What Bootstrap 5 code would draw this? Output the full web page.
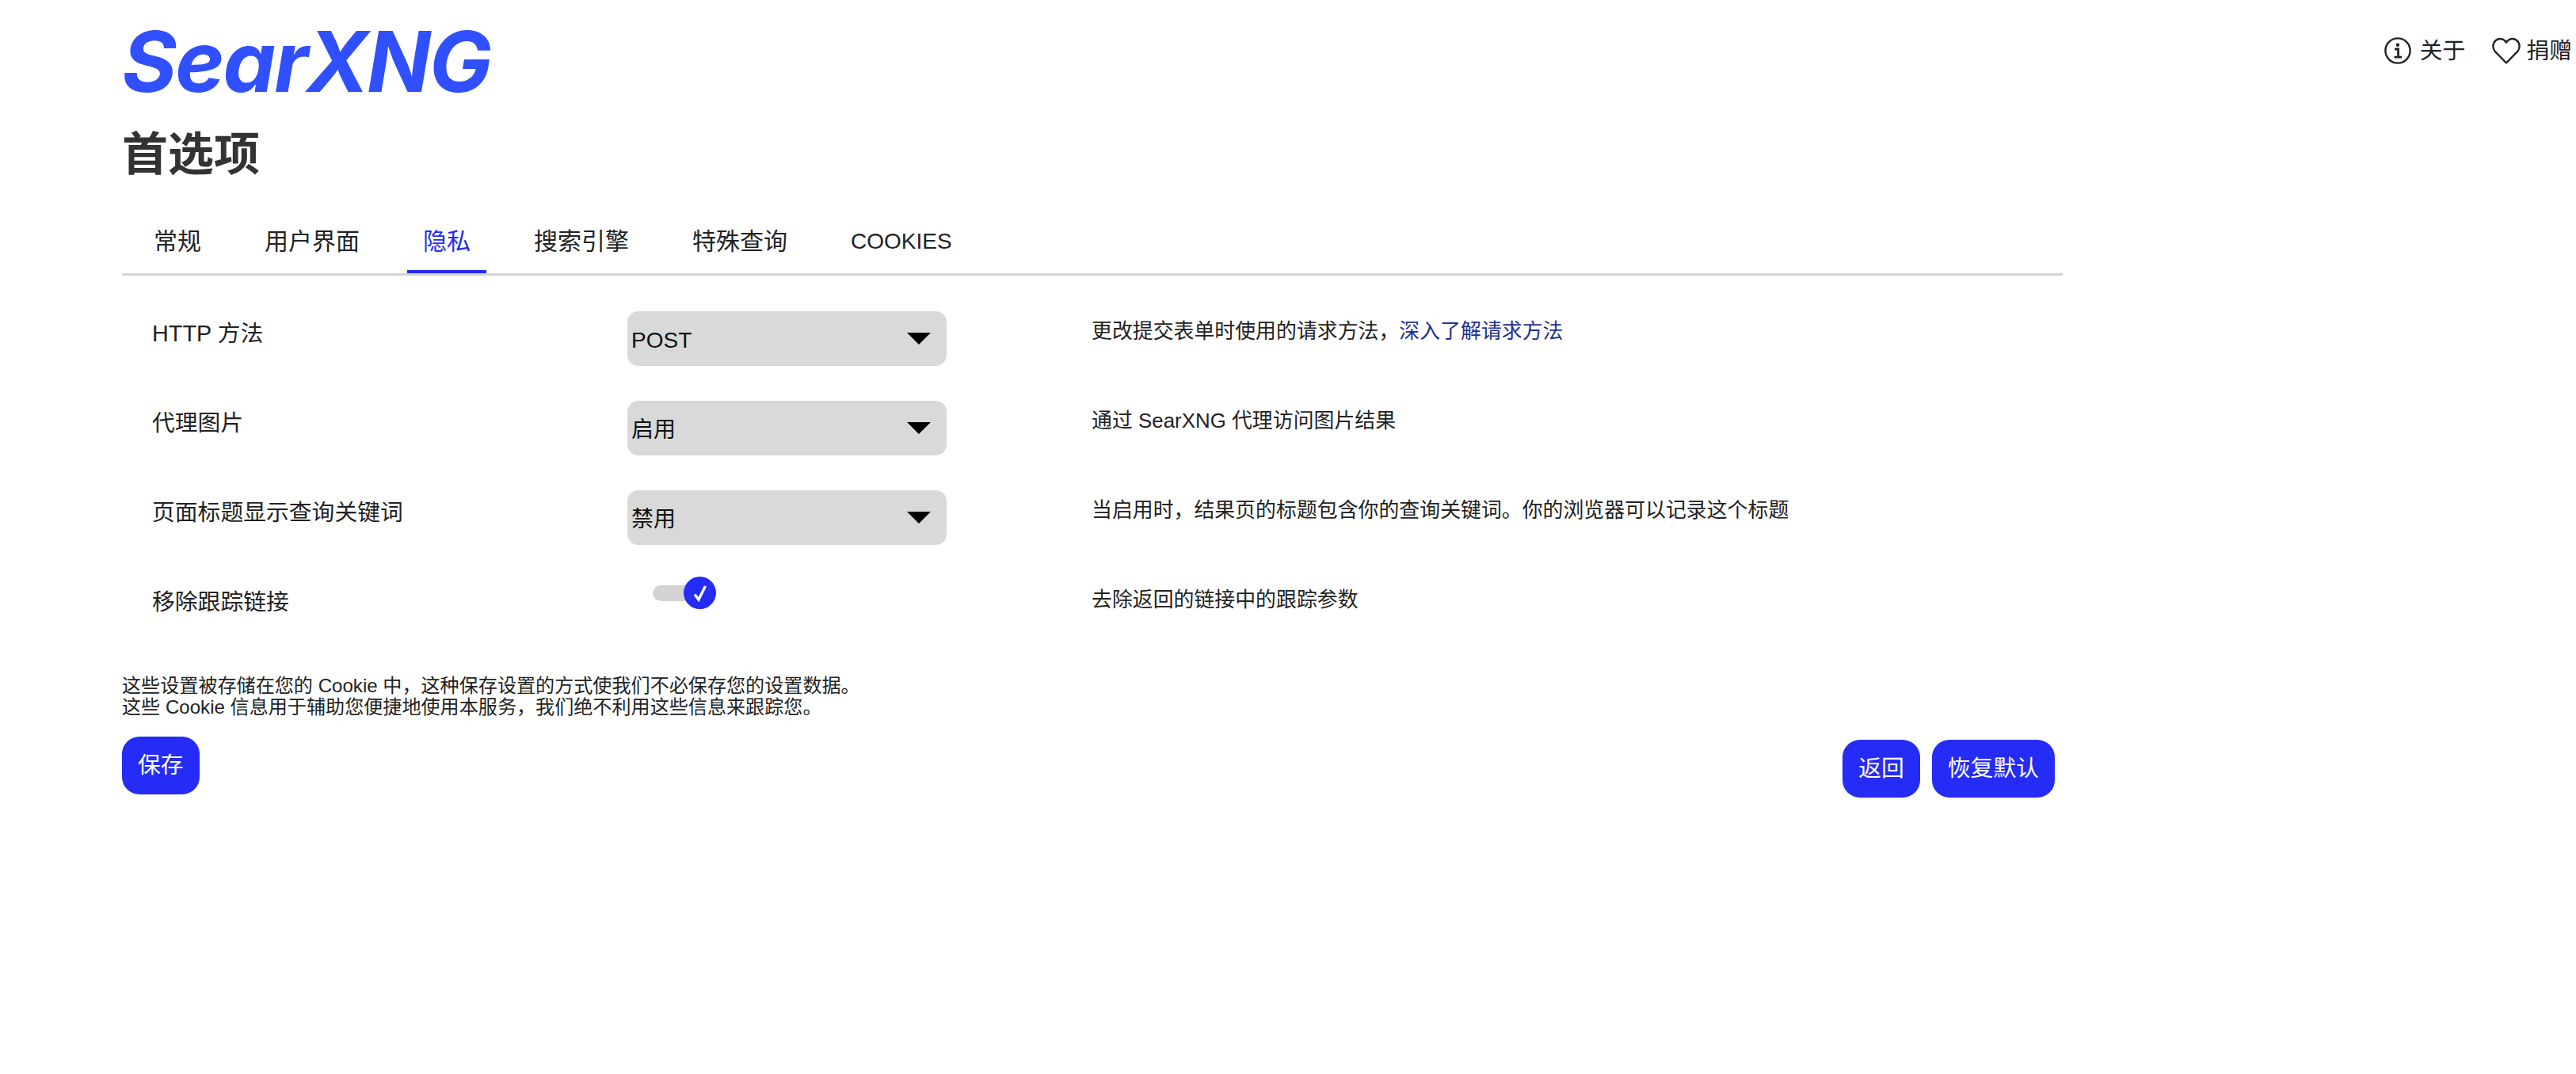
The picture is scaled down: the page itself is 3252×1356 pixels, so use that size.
<!DOCTYPE html>
<html lang="zh-CN">
<head>
<meta charset="utf-8">
<title>SearXNG 首选项</title>
<link href="https://cdn.jsdelivr.net/npm/bootstrap@5.3.0/dist/css/bootstrap.min.css" rel="stylesheet">
<style>
body{font-family:"Liberation Sans","Noto Sans CJK SC",sans-serif;color:#222;background:#fff;font-size:28.8px;line-height:1.2}
.top-links{padding:47px 5px 0 0;gap:34px}
.top-links a{color:#222;text-decoration:none;display:flex;align-items:center;gap:11px;height:34px}
.top-links a.heart-link{gap:7px}
.page-wrap{width:2604px;padding-left:154px;margin-top:-81px}
.logo-text{font-family:"Inter","Liberation Sans",sans-serif;font-weight:700;font-style:italic;font-size:105.7px;line-height:76px;color:#3050ff;padding-top:40px;height:114px;letter-spacing:-2px}
.pref-title{font-size:58px;font-weight:700;color:#333;line-height:70px;margin:46px 0 0;height:70px}
.tab-bar{height:63px;border-bottom:3px solid #d4d4d4;gap:40px;flex-wrap:nowrap;margin-top:55px;padding-left:20px}
.tab-bar .nav-link{padding:3px 20px 0;height:60px;font-size:30px;line-height:34px;color:#222;border-bottom:4px solid transparent;border-radius:0}
.tab-bar .nav-link.active{color:#252cf5;border-bottom-color:#252cf5}
.tab-bar .nav-link.latin-tab{font-size:28px}
.pref-row{height:113px}
.pref-list{margin-top:45px}
.pref-name{width:638px;padding:11px 0 0 38px;font-size:28.8px;line-height:34px}
.pref-field{width:586px}
.pref-select.form-select{width:403px;height:69px;background-color:#d9d9d9;border:0;border-radius:14px;padding:4px 50px 0 5px;font-size:28px;line-height:34px;color:#111;background-position:right 20px center;background-size:30px 15px;background-image:url("data:image/svg+xml,%3Csvg xmlns='http://www.w3.org/2000/svg' viewBox='0 0 30 15' preserveAspectRatio='none'%3E%3Cpath d='M0 0H30L15 15Z' fill='%23000'/%3E%3C/svg%3E")}
.pref-desc{font-size:25.9px;line-height:32px;padding-top:9px;color:#222}
.pref-desc a{color:#1f2f8f;text-decoration:none}
.toggle-box{margin:-4px 0 0 32px;height:41px;width:80px}
.toggle-track{width:60px;height:20px;border-radius:10px;background:#d4d4d4}
.toggle-knob{width:41px;height:41px;border-radius:50%;background:#252cf5;margin-left:-21px;flex:none}
.cookie-note{font-size:24.1px;line-height:27px;color:#222;margin-top:7px}
.bar-actions{padding-right:10px;margin-top:24px}
.act-btn.btn{background:#252cf5;border:0;color:#fff;font-size:28.8px;line-height:34px;padding:19px 20px 20px;border-radius:22px}
.act-right{gap:15px;margin-top:4px}
</style>
</head>
<body>
<div class="d-flex justify-content-end top-links">
  <a href="#"><svg width="34" height="34" viewBox="0 0 34 34" fill="none" stroke="#222" stroke-width="2.4"><circle cx="17" cy="17" r="15.6"/><circle cx="17" cy="9.8" r="2.2" fill="#222" stroke="none"/><path d="M13 15h4.6v10M12.5 25.2h9.6" stroke-width="2.8"/></svg>关于</a>
  <a class="heart-link" href="#"><svg width="36" height="34" viewBox="0 0 36 34" fill="none" stroke="#222" stroke-width="2.4" stroke-linejoin="round"><path d="M18 32.5 4 18.2C0.2 14 .6 7.6 4.8 4 9 .6 14.8 1.6 18 6.6 21.2 1.6 27 .6 31.2 4c4.2 3.6 4.6 10 .8 14.2Z"/></svg>捐赠</a>
</div>
<div class="page-wrap">
  <div class="logo-text">SearXNG</div>
  <h1 class="pref-title">首选项</h1>
  <ul class="nav tab-bar">
    <li class="nav-item"><a class="nav-link" href="#">常规</a></li>
    <li class="nav-item"><a class="nav-link" href="#">用户界面</a></li>
    <li class="nav-item"><a class="nav-link active" href="#">隐私</a></li>
    <li class="nav-item"><a class="nav-link" href="#">搜索引擎</a></li>
    <li class="nav-item"><a class="nav-link" href="#">特殊查询</a></li>
    <li class="nav-item"><a class="nav-link latin-tab" href="#">COOKIES</a></li>
  </ul>
  <div class="pref-list">
    <div class="d-flex align-items-start pref-row">
      <div class="pref-name">HTTP 方法</div>
      <div class="pref-field"><select class="form-select pref-select"><option>POST</option><option>GET</option></select></div>
      <div class="pref-desc">更改提交表单时使用的请求方法，<a href="#">深入了解请求方法</a></div>
    </div>
    <div class="d-flex align-items-start pref-row">
      <div class="pref-name">代理图片</div>
      <div class="pref-field"><select class="form-select pref-select"><option>启用</option><option>禁用</option></select></div>
      <div class="pref-desc">通过 SearXNG 代理访问图片结果</div>
    </div>
    <div class="d-flex align-items-start pref-row">
      <div class="pref-name">页面标题显示查询关键词</div>
      <div class="pref-field"><select class="form-select pref-select"><option>禁用</option><option>启用</option></select></div>
      <div class="pref-desc">当启用时，结果页的标题包含你的查询关键词。你的浏览器可以记录这个标题</div>
    </div>
    <div class="d-flex align-items-start pref-row">
      <div class="pref-name">移除跟踪链接</div>
      <div class="pref-field"><div class="d-flex align-items-center toggle-box"><span class="toggle-track"></span><span class="toggle-knob d-flex align-items-center justify-content-center"><svg width="18" height="22" viewBox="0 0 18 22" fill="none" stroke="#fff" stroke-width="3.4"><path d="M2 12.5 7 19 15.5 2"/></svg></span></div></div>
      <div class="pref-desc">去除返回的链接中的跟踪参数</div>
    </div>
  </div>
  <p class="cookie-note mb-0">这些设置被存储在您的 Cookie 中，这种保存设置的方式使我们不必保存您的设置数据。<br>这些 Cookie 信息用于辅助您便捷地使用本服务，我们绝不利用这些信息来跟踪您。</p>
  <div class="d-flex justify-content-between align-items-start bar-actions">
    <button class="btn act-btn" type="button">保存</button>
    <div class="d-flex act-right">
      <button class="btn act-btn" type="button">返回</button>
      <button class="btn act-btn" type="button">恢复默认</button>
    </div>
  </div>
</div>
<script src="https://cdn.jsdelivr.net/npm/bootstrap@5.3.0/dist/js/bootstrap.bundle.min.js"></script>
</body>
</html>
